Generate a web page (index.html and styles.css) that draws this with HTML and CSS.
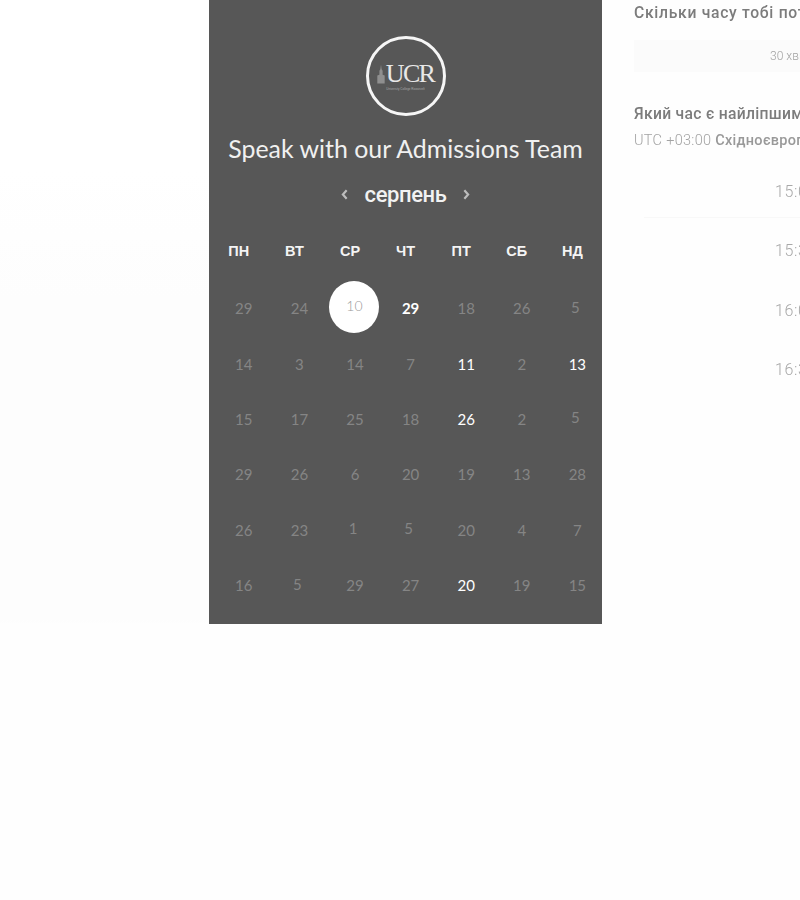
FILE: index.html
```html
<!DOCTYPE html>
<html lang="uk">
<head>
<meta charset="utf-8">
<title>Speak with our Admissions Team</title>
<link rel="stylesheet" href="styles.css">
</head>
<body>
<main class="page">
  <div class="left"></div>
  <section class="panel">
    <div class="logo">
      <svg class="tower" viewBox="0 0 10 24" aria-hidden="true">
        <path d="M5 0 L5.8 6 L7 8 L7 13 L9.6 14 L9.6 24 L0.4 24 L0.4 14 L3 13 L3 8 L4.2 6 Z" fill="#8f8f8f"/>
      </svg>
      <span class="ucr">UCR</span>
      <span class="college">University College Roosevelt</span>
    </div>
    <h1 class="title">Speak with our Admissions Team</h1>
    <div class="month">
      <svg class="chev" viewBox="0 0 8 12" aria-hidden="true"><path d="M6 2 L2.5 6 L6 10"/></svg>
      <span class="month-name">серпень</span>
      <svg class="chev" viewBox="0 0 8 12" aria-hidden="true"><path d="M2 2 L5.5 6 L2 10"/></svg>
    </div>
    <div class="weekdays">
      <span>ПН</span><span>ВТ</span><span>СР</span><span>ЧТ</span><span>ПТ</span><span>СБ</span><span>НД</span>
    </div>
    <div class="days">
      <span>29</span><span>24</span><span class="sel"><b>10</b></span><span class="on strong">29</span><span>18</span><span>26</span><span class="up">5</span>
      <span>14</span><span>3</span><span>14</span><span>7</span><span class="on">11</span><span>2</span><span class="on">13</span>
      <span>15</span><span>17</span><span>25</span><span>18</span><span class="on">26</span><span>2</span><span class="up">5</span>
      <span>29</span><span>26</span><span>6</span><span>20</span><span>19</span><span>13</span><span>28</span>
      <span>26</span><span>23</span><span class="up">1</span><span class="up">5</span><span>20</span><span>4</span><span>7</span>
      <span>16</span><span class="up">5</span><span>29</span><span>27</span><span class="on">20</span><span>19</span><span>15</span>
    </div>
  </section>
  <section class="side">
    <h2 class="q">Скільки часу тобі потрібно?</h2>
    <div class="dur">30 хвилин</div>
    <h2 class="q q2">Який час є найліпшим для тебе?</h2>
    <p class="tz">UTC +03:00 <b>Східноєвропейський час</b></p>
    <ul class="slots">
      <li><span class="slot-first">15:00</span></li>
      <li>15:30</li>
      <li>16:00</li>
      <li>16:30</li>
    </ul>
  </section>
</main>
</body>
</html>
```
FILE: styles.css
```css
html, body {
  margin: 0;
  height: 900px;
  overflow: hidden;
  background: #fefefe;
}
.page {
  display: flex;
  align-items: flex-start;
  width: 1000px;
}
.left {
  width: 209px;
  height: 624px;
  flex: none;
  background: linear-gradient(#fff 0, #fff 170px, #fdfdfd 300px, #fdfdfd 620px, #fefefe 624px);
}
.panel {
  width: 393px;
  height: 624px;
  flex: none;
  box-sizing: border-box;
  padding-top: 36px;
  background: #575757;
  color: #fff;
  display: flex;
  flex-direction: column;
  align-items: center;
}
.logo {
  width: 80px;
  height: 80px;
  box-sizing: border-box;
  border: 3px solid #f6f6f6;
  border-radius: 50%;
  display: grid;
  grid-template-columns: auto auto;
  grid-template-rows: auto auto;
  justify-content: center;
  align-content: center;
  column-gap: 1px;
  padding-top: 2px;
}
.tower {
  width: 8px;
  height: 24px;
  align-self: end;
  margin-bottom: 1px;
}
.ucr {
  font: 400 26px/23px "Liberation Serif", serif;
  letter-spacing: -1.7px;
  color: #e8e8e8;
}
.college {
  grid-column: 1 / span 2;
  font: 400 3px/5px "Liberation Sans", sans-serif;
  color: #a9a9a9;
  text-align: center;
  white-space: nowrap;
}
.title {
  margin: 14px 0 0;
  font: 400 24.9px/36px Lato, sans-serif;
  color: #f0f0f0;
  white-space: nowrap;
}
.month {
  margin-top: 13px;
  height: 32px;
  display: flex;
  align-items: center;
  justify-content: center;
  gap: 16px;
}
.month-name {
  font: 500 22px/32px Roboto, sans-serif;
  letter-spacing: -0.4px;
  color: #f2f2f2;
}
.chev {
  width: 9px;
  height: 13px;
  margin-top: -2px;
  fill: none;
  stroke: #bdbdbd;
  stroke-width: 2;
}
.weekdays, .days {
  display: grid;
  grid-template-columns: repeat(7, 55.6px);
  align-self: flex-start;
  text-align: center;
}
.weekdays {
  margin: 30px 0 0 2px;
  height: 20px;
  font: 700 14.5px/20px "Liberation Sans", sans-serif;
  color: #f4f4f4;
}
.days {
  margin: 20px 0 0 7px;
  grid-auto-rows: 55.4px;
  font: 400 15px/1 Lato, sans-serif;
  color: #858585;
}
.days span {
  display: flex;
  align-items: center;
  justify-content: center;
}
.days .on {
  color: #fff;
}
.days .strong {
  font-weight: 700;
}
.days .up {
  padding: 0 4px 3px 0;
  box-sizing: border-box;
}
.days .sel {
  margin-left: -1px;
}
.days .sel b {
  width: 50px;
  height: 52px;
  margin-top: -3px;
  border-radius: 50%;
  background: #fff;
  color: #9a9a9a;
  font: 300 14px/50px Lato, sans-serif;
  text-align: center;
}
.side {
  flex: none;
  width: 328px;
  margin-left: 32px;
  font-family: Roboto, sans-serif;
  white-space: nowrap;
  will-change: opacity;
}
.q {
  margin: 3px 0 0;
  font: 500 15.7px/20px Roboto, sans-serif;
  letter-spacing: 0.7px;
  color: #7c7c7c;
}
.q2 {
  margin-top: 32px;
  letter-spacing: 0.3px;
}
.dur {
  margin-top: 17px;
  height: 32px;
  background: #fbfbfb;
  font: 300 12px/32px Roboto, sans-serif;
  color: #a3a3a3;
  text-align: center;
}
.tz {
  margin: 7px 0 0;
  font: 300 14.5px/20px Roboto, sans-serif;
  letter-spacing: 0.3px;
  color: #a3a3a3;
}
.tz b {
  font-weight: 500;
  color: #999;
}
.slots {
  list-style: none;
  width: 324px;
  margin: 21px 0 0;
  padding: 0;
}
.slots li {
  height: 59.3px;
  box-sizing: border-box;
  font: 300 16px/40px Roboto, sans-serif;
  letter-spacing: 0.6px;
  color: #a8a8a8;
  text-align: center;
}
.slot-first {
  display: block;
  height: 45px;
  margin-left: 10px;
  padding-right: 10px;
  border-bottom: 1px solid #f8f8f8;
}
```
